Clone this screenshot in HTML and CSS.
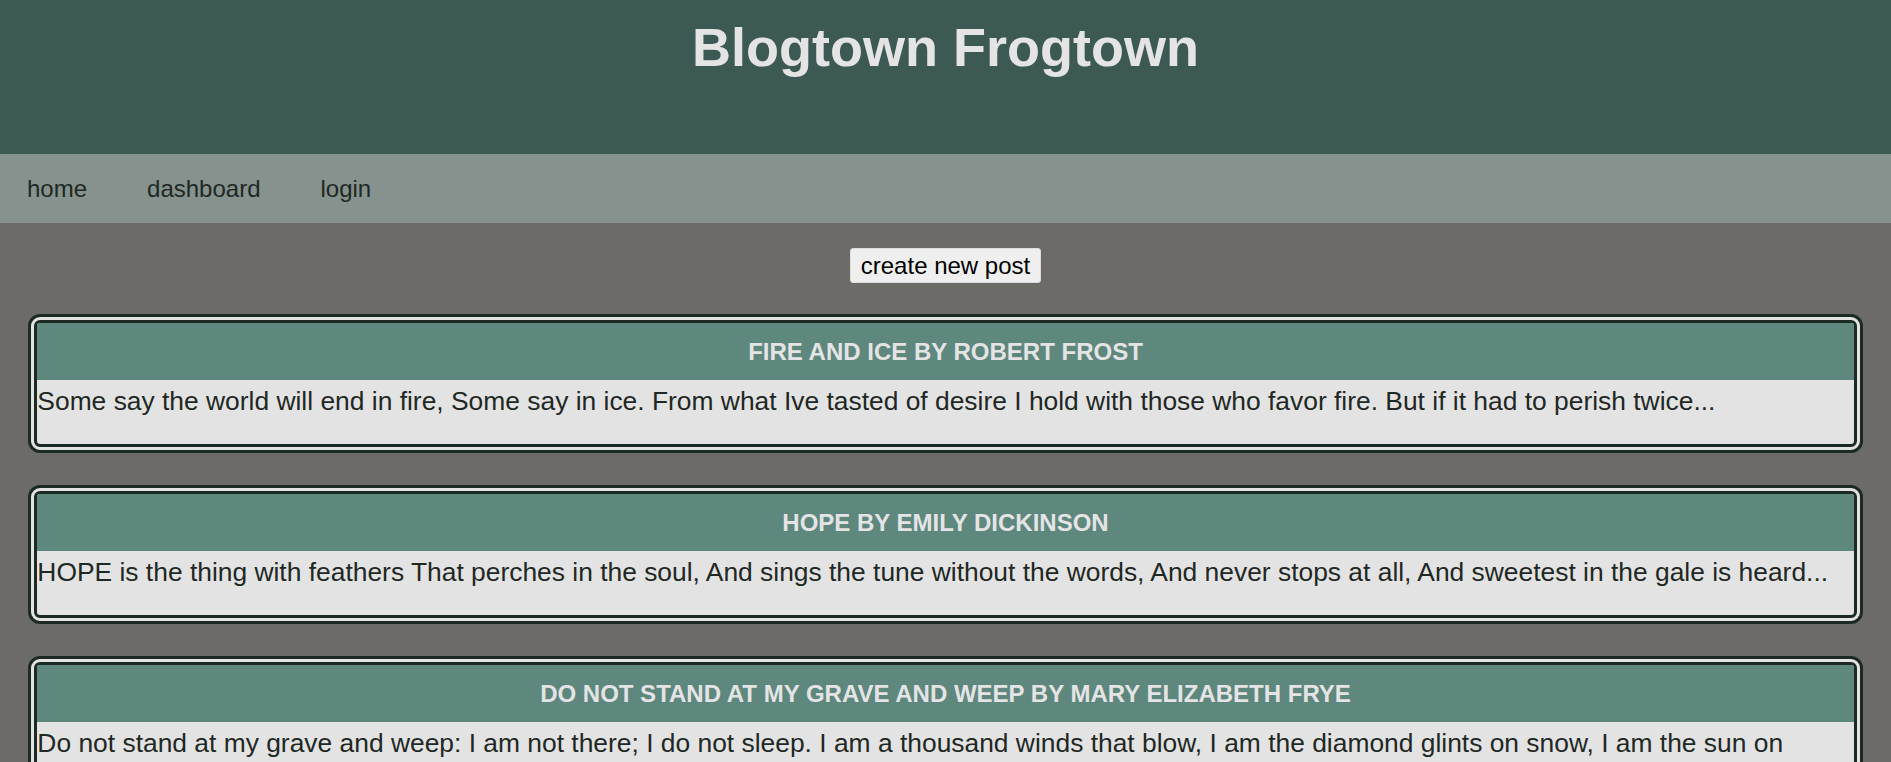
FILE: index.html
```html
<!DOCTYPE html>
<html lang="en">
<head>
<meta charset="utf-8">
<title>Blogtown Frogtown</title>
<link rel="stylesheet" href="styles.css">
</head>
<body>
<header class="site-header">
  <h1 class="site-title">Blogtown Frogtown</h1>
</header>
<nav class="site-nav">
  <a class="nav-link" href="#">home</a>
  <a class="nav-link" href="#">dashboard</a>
  <a class="nav-link" href="#">login</a>
</nav>
<main class="content">
  <div class="actions">
    <button class="new-post-btn" type="button">create new post</button>
  </div>
  <article class="post-card">
    <h2 class="post-title">FIRE AND ICE BY ROBERT FROST</h2>
    <p class="post-body">Some say the world will end in fire, Some say in ice. From what Ive tasted of desire I hold with those who favor fire. But if it had to perish twice...</p>
  </article>
  <article class="post-card">
    <h2 class="post-title">HOPE BY EMILY DICKINSON</h2>
    <p class="post-body">HOPE is the thing with feathers That perches in the soul, And sings the tune without the words, And never stops at all, And sweetest in the gale is heard...</p>
  </article>
  <article class="post-card">
    <h2 class="post-title">DO NOT STAND AT MY GRAVE AND WEEP BY MARY ELIZABETH FRYE</h2>
    <p class="post-body">Do not stand at my grave and weep: I am not there; I do not sleep. I am a thousand winds that blow, I am the diamond glints on snow, I am the sun on ripened grain, I am the gentle autumn rain...</p>
  </article>
</main>
</body>
</html>
```
FILE: styles.css
```css
* {
  box-sizing: border-box;
}

html, body {
  margin: 0;
  padding: 0;
}

body {
  background: #6c6b67;
  font-family: "Liberation Sans", Arial, sans-serif;
  color: #1f2824;
}

.site-header {
  background: #3d5954;
  height: 154px;
  padding-top: 16px;
}

.site-title {
  margin: 0;
  text-align: center;
  font-size: 54px;
  font-weight: bold;
  color: #e4e4e4;
}

.site-nav {
  background: #85928d;
  height: 69px;
  display: flex;
  align-items: center;
  gap: 60px;
  padding-left: 27px;
}

.nav-link {
  font-size: 24px;
  color: #1f2824;
  text-decoration: none;
}

.content {
  padding-top: 25px;
}

.actions {
  display: flex;
  justify-content: center;
  margin-bottom: 31px;
}

.new-post-btn {
  font-family: "Liberation Sans", Arial, sans-serif;
  font-size: 24px;
  color: #000;
  background: #efefef;
  border: 1px solid #dcdcdc;
  border-radius: 3px;
  height: 35px;
  padding: 0 10px;
  line-height: 1;
}

.post-card {
  width: 97%;
  margin: 0 auto 32px;
  background: #e3e3e3;
  border: 9px double #1b2a23;
  border-radius: 12px;
  overflow: hidden;
}

.post-title {
  margin: 0;
  background: #5e877e;
  color: #e4e4e4;
  height: 57px;
  display: flex;
  align-items: center;
  justify-content: center;
  font-size: 24px;
  font-weight: bold;
}

.post-body {
  margin: 0;
  padding: 6px 0 27px;
  font-size: 26.4px;
  color: #1f2824;
}
```
